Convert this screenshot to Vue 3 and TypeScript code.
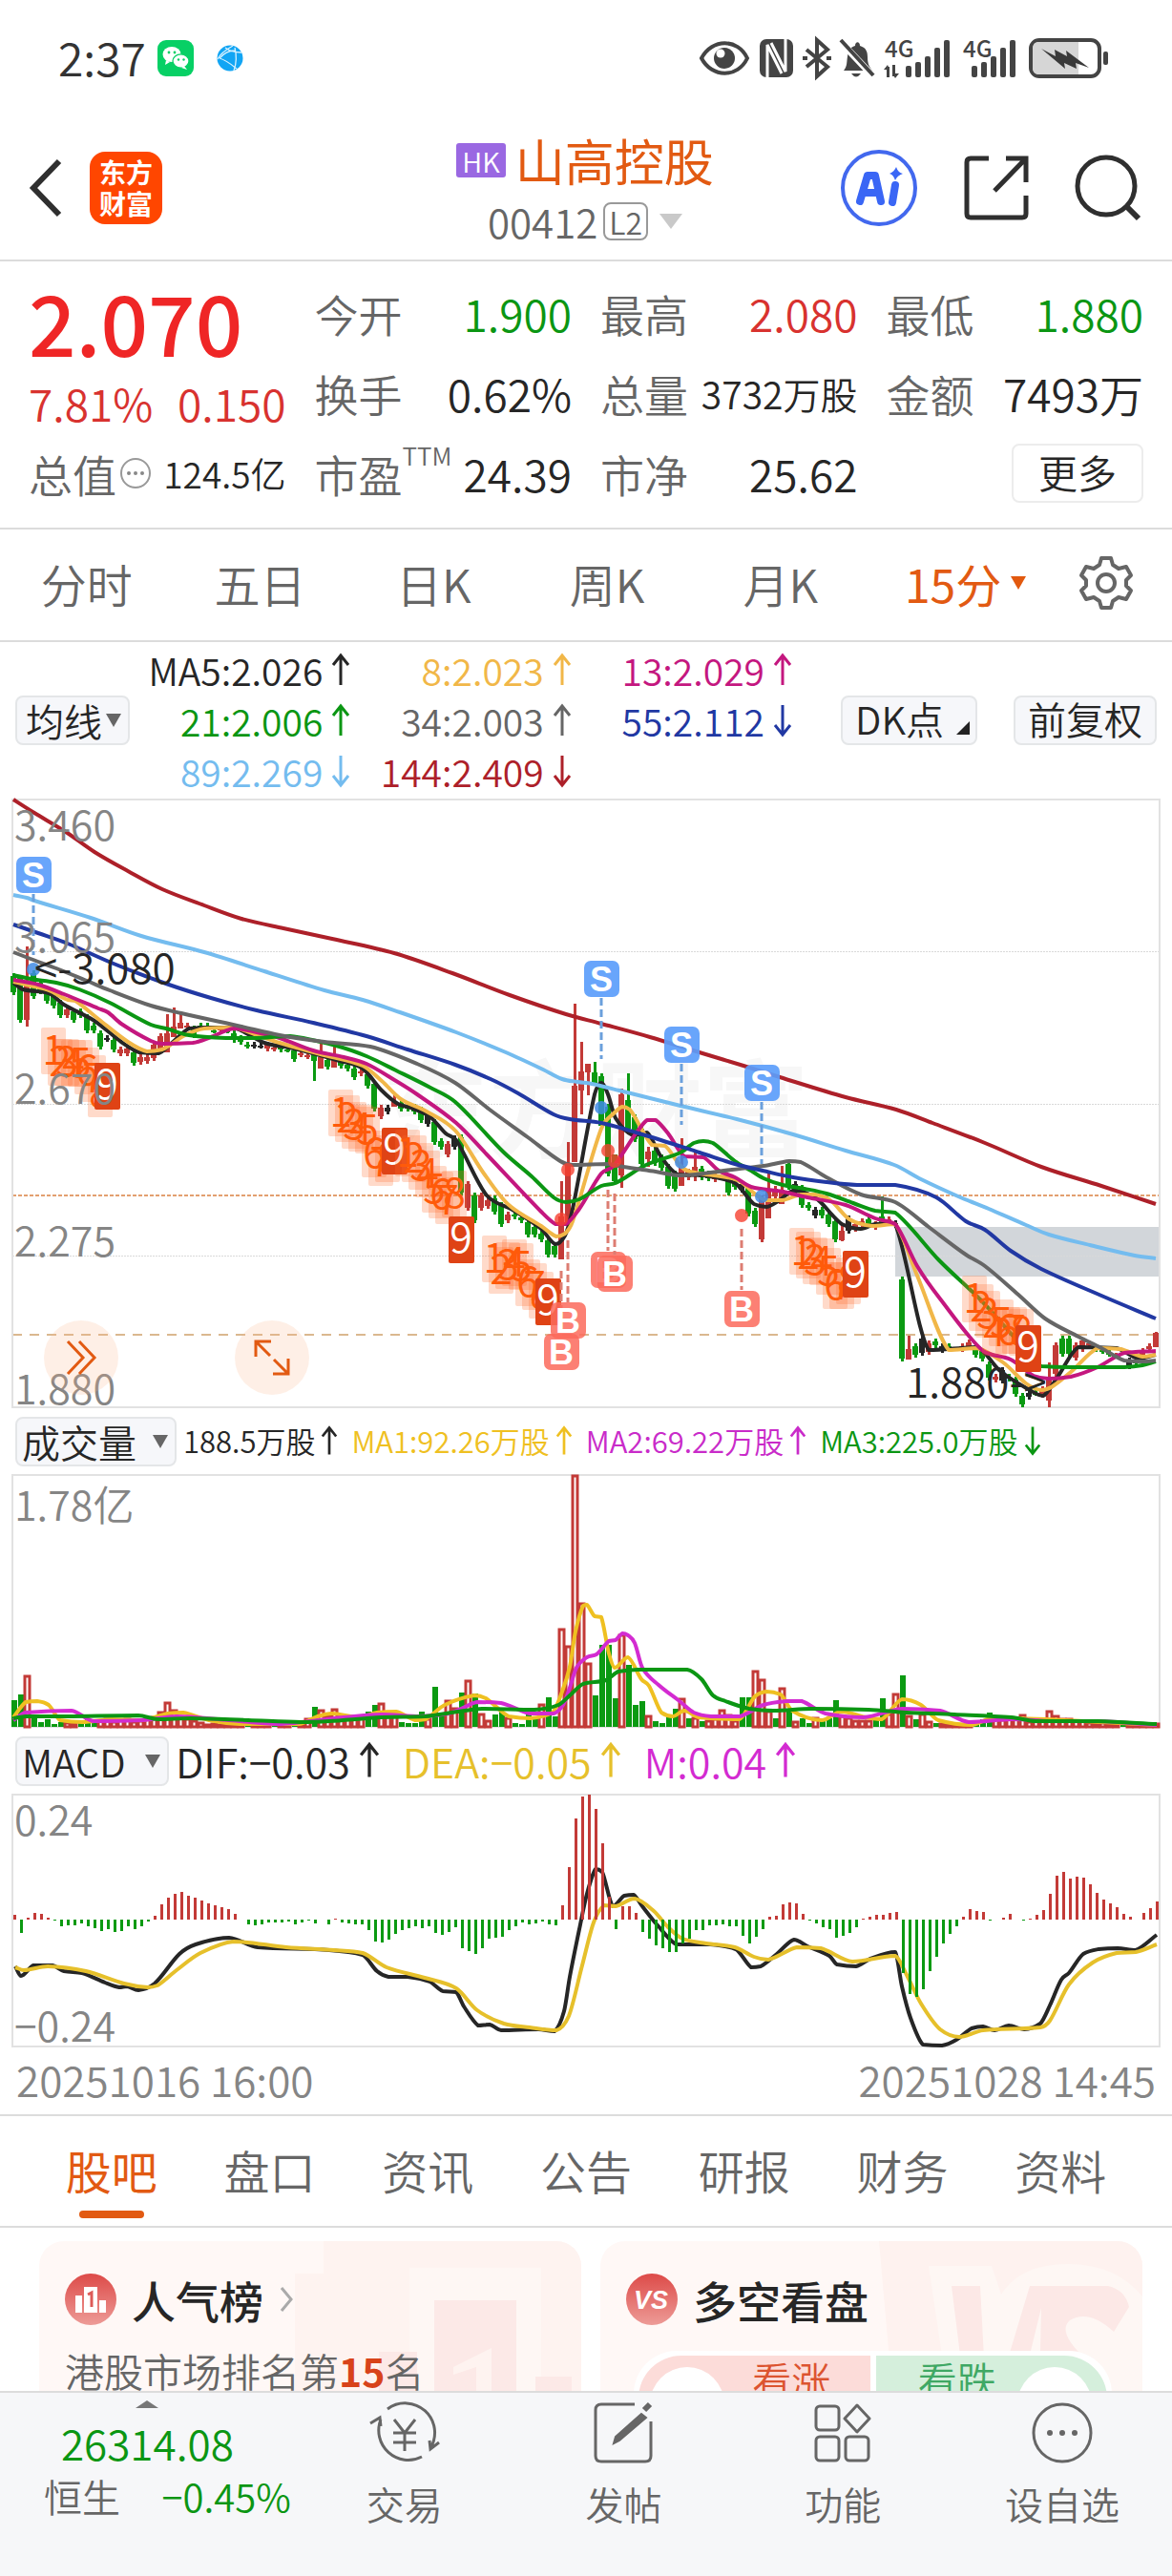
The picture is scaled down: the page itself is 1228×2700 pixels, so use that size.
<script setup lang="ts">
import { ref } from 'vue'

type Tone = 'r' | 'g' | 'k'
interface Candle { x: number; tone: Tone; high: number; low: number; top: number; bottom: number }
interface Line { name: string; color: string; d: string }

const RED = '#c33a37'
const GREEN = '#0b9a12'
const INK = '#262626'
const tones: Record<Tone, string> = { r: RED, g: GREEN, k: INK }

const xAt = (i: number): number => 14 + i * 7

// Turns "x,y x,y ..." into a softly rounded path.
function smooth(points: string): string {
  const p = points.trim().split(/\s+/).map((s) => s.split(',').map(Number))
  let d = `M${p[0][0]} ${p[0][1]}`
  for (let i = 0; i < p.length - 1; i++) {
    const a = p[Math.max(i - 1, 0)]
    const b = p[i]
    const c = p[i + 1]
    const e = p[Math.min(i + 2, p.length - 1)]
    const k = (c[0] - b[0]) / 3
    const limit = (slope: number): number => {
      const own = (c[1] - b[1]) / (c[0] - b[0])
      return slope * own < 0 ? 0 : Math.sign(slope) * Math.min(Math.abs(slope), Math.abs(own) * 2)
    }
    const s1 = limit((c[1] - a[1]) / (c[0] - a[0]))
    const s2 = limit((e[1] - b[1]) / (e[0] - b[0]))
    d += `C${(b[0] + k).toFixed(1)} ${(b[1] + k * s1).toFixed(1)} ${(c[0] - k).toFixed(1)} ${(c[1] - k * s2).toFixed(1)} ${c[0]} ${c[1]}`
  }
  return d
}

// index, tone, high, low, optional body top and bottom
const rawCandles = `0g1020-1043 1g1022-1072 2r992-1076-1030-1069 3g1017-1047 4g1027-1042 5g1038-1052 6g1040-1057 7g1048-1067 8r1055-1067 9g1057-1072
10g1057-1067 11g1063-1083 12g1072-1083 13g1080-1100 14k1085-1092 15g1087-1103 16r1097-1107 17r1096-1107 18g1100-1117 19r1105-1116 20r1105-1115
21r1092-1112 22r1083-1103 23r1063-1103-1083-1103 24r1056-1087-1076-1087 25r1063-1078-1072-1078 26r1072-1080 27g1075-1088 28g1072-1080 29g1072-1078
30g1077-1083 31r1075-1082 32g1077-1083 33g1080-1093 34g1085-1095 35g1092-1099 36k1092-1099 37k1093-1099 38r1092-1102 39r1095-1102 40g1093-1103
41g1097-1103 42g1098-1113 43r1101-1108 44r1103-1110 45g1103-1133-1103-1112 46r1093-1120-1108-1120 47g1108-1121 48r1097-1119-1108-1119 49g1110-1120 50g1113-1123
51g1117-1132 52r1120-1128 53g1123-1141 54g1133-1165 55r1158-1173 56k1158-1168 57r1145-1160-1154-1160 58g1153-1165 59g1155-1165 60g1157-1168
61g1160-1177 62k1165-1181 63g1173-1200 64g1193-1205 65r1196-1213 66k1190-1205 67g1189-1253 68r1238-1269 69g1250-1282 70r1250-1269 71r1255-1267 72g1253-1273
73g1260-1286 74r1270-1282 75g1270-1278 76g1273-1282 77g1278-1297 78g1283-1297 79g1290-1302 80g1297-1318 81g1303-1318 82r1238-1320-1275-1320
83r1197-1285-1220-1285 84r1052-1218-1138-1218 85r1092-1168-1123-1143 86r1115-1148-1115-1124 87g1113-1137-1124-1137 88g1125-1183 89g1157-1233 90g1210-1240-1210-1238
91r1141-1245-1147-1232 92g1125-1183-1153-1183 93g1168-1197 94g1180-1223 95r1202-1223-1207-1215 96g1203-1222 97g1210-1227 98g1220-1246 99g1227-1249
100r1193-1243-1222-1243 101r1225-1237 102r1207-1238-1223-1231 103g1222-1237 104g1227-1238 105r1230-1239 106r1232-1237 107g1233-1253 108g1237-1247 109k1238-1250
110g1242-1275 111g1266-1286 112r1253-1302 113r1230-1277-1247-1277 114r1243-1257 115r1222-1262-1247-1262 116g1217-1247 117k1238-1252 118g1242-1266 119g1260-1269
120k1265-1277 121g1265-1277 122g1270-1286 123g1277-1302 124r1282-1301-1290-1300 125k1274-1293 126r1280-1291 127r1277-1287 128g1275-1287 129r1280-1289
130g1254-1283-1275-1283 131r1275-1284 132k1279-1287 133g1338-1427 134r1400-1425-1414-1425 135g1408-1423 136k1400-1421 137r1405-1420 138g1403-1413 139k1408-1418
140g1408-1415 142r1408-1417 143r1404-1415 144g1408-1423 145g1413-1427 146g1427-1447 147r1440-1449 148k1433-1450 149g1440-1448 150g1443-1464
151g1460-1475 152k1457-1467 153g1457-1463 154r1453-1465 155r1428-1475-1443-1468 156r1407-1443 157g1400-1422 158g1400-1422 159r1407-1426 160r1402-1417
161r1405-1413 162g1409-1417 163g1412-1419 164g1415-1422 165r1418-1422 167k1423-1435 168g1424-1430 169r1413-1423 170r1408-1417 171r1396-1412-1397-1412`

const candles: Candle[] = rawCandles.split(/\s+/).map((s) => {
  const m = /^(\d+)([rgk])(.+)$/.exec(s)!
  const v = m[3].split('-').map(Number)
  return { x: xAt(+m[1]), tone: m[2] as Tone, high: v[0], low: v[1], top: v[2] ?? v[0] + 3, bottom: v[3] ?? v[1] - 3 }
})

const priceLines: Line[] = [
  { name: 'MA144', color: '#ad2029', d: smooth('14,838 36,852 69,872 99,893 134,913 170,932 214,949 253,963 297,973 348,984 413,999 474,1020 534,1043 593,1063 630,1073 681,1087 736,1104 779,1117 817,1129 886,1150 939,1163 977,1177 1032,1198 1091,1223 1154,1243 1211,1262') },
  { name: 'MA5', color: INK, d: smooth('14,1030 24,1037 51,1041 67,1053 99,1070 127,1092 146,1103 166,1104 178,1095 198,1078 214,1077 245,1077 277,1093 308,1099 356,1112 380,1120 400,1143 417,1157 430,1161 450,1170 467,1188 478,1195 510,1253 537,1268 567,1288 582,1304 592,1295 600,1267 623,1147 630,1135 637,1147 645,1172 663,1190 678,1187 693,1213 710,1231 737,1232 770,1240 790,1262 803,1265 817,1258 831,1248 854,1255 882,1283 902,1288 917,1283 938,1283 973,1415 1024,1412 1048,1437 1079,1457 1093,1463 1107,1445 1130,1412 1170,1413 1193,1424 1211,1420') },
  { name: 'MA8', color: '#f1b748', d: smooth('14,1029 36,1034 51,1038 71,1048 79,1049 103,1068 134,1092 154,1102 170,1100 194,1085 214,1078 245,1077 269,1085 293,1093 336,1105 380,1117 400,1133 420,1152 447,1165 477,1185 507,1230 532,1262 567,1285 583,1296 592,1293 600,1280 630,1183 643,1167 652,1160 660,1163 683,1200 697,1201 713,1222 723,1228 773,1237 793,1253 803,1258 820,1258 839,1252 854,1252 870,1258 890,1278 914,1285 938,1283 961,1337 994,1415 1024,1413 1051,1428 1075,1450 1091,1457 1103,1453 1122,1438 1150,1413 1174,1414 1197,1422 1211,1420') },
  { name: 'MA13', color: '#c4177f', d: smooth('14,1027 40,1032 67,1042 103,1057 113,1061 127,1073 158,1091 170,1094 202,1093 221,1087 245,1078 269,1082 293,1088 328,1101 360,1108 384,1115 415,1133 437,1147 478,1177 510,1210 567,1270 582,1283 593,1283 607,1267 630,1230 643,1222 667,1187 678,1174 687,1174 700,1188 717,1212 737,1213 753,1227 770,1234 787,1244 820,1249 846,1255 886,1263 917,1277 938,1283 961,1327 984,1360 1030,1416 1059,1425 1083,1442 1099,1445 1122,1443 1150,1433 1178,1418 1211,1416') },
  { name: 'MA21', color: '#0b9613', d: smooth('14,1022 32,1026 59,1030 83,1037 115,1051 158,1074 174,1078 198,1085 237,1088 269,1088 304,1086 352,1096 384,1107 415,1122 451,1140 477,1155 527,1207 557,1233 580,1255 593,1260 607,1257 630,1243 645,1240 677,1221 713,1208 727,1198 737,1196 747,1198 770,1217 787,1227 800,1235 820,1242 843,1246 866,1251 894,1261 917,1269 938,1271 984,1321 1028,1363 1063,1402 1091,1432 1122,1433 1178,1433 1197,1431 1211,1427') },
  { name: 'MA34', color: '#666666', d: smooth('14,998 32,1005 59,1015 91,1028 115,1038 158,1054 190,1062 253,1076 293,1085 340,1092 388,1097 437,1115 477,1135 513,1163 553,1192 587,1217 600,1221 637,1220 653,1223 687,1228 713,1232 767,1226 800,1222 827,1217 839,1218 866,1234 902,1252 938,1260 973,1286 1012,1315 1032,1327 1067,1357 1095,1382 1130,1401 1154,1413 1178,1426 1197,1427 1211,1426') },
  { name: 'MA55', color: '#2138a3', d: smooth('14,969 40,978 71,989 119,1010 174,1031 221,1046 269,1059 328,1072 384,1086 427,1100 477,1116 514,1131 543,1146 580,1168 597,1173 630,1177 673,1189 733,1208 770,1220 799,1227 831,1234 866,1239 898,1242 938,1242 981,1255 1012,1280 1032,1289 1059,1311 1091,1330 1154,1358 1211,1382') },
  { name: 'MA89', color: '#74bcef', d: smooth('14,938 28,941 36,944 95,962 148,981 214,998 277,1018 340,1038 380,1048 419,1061 478,1082 530,1103 569,1121 589,1131 605,1134 620,1136 649,1143 709,1158 772,1173 831,1189 886,1206 937,1221 965,1236 1004,1254 1036,1267 1075,1284 1099,1294 1142,1305 1189,1316 1211,1319') },
]

const priceLabels = [
  { text: '3.460', y: 881 }, { text: '3.065', y: 998 }, { text: '2.670', y: 1157 },
  { text: '2.275', y: 1317 }, { text: '1.880', y: 1472 },
]

// Nine-turn counts: x of the first mark, tops of marks 1-8, then the closing 9.
const turns = [
  { x: 43, tops: [1077, 1089, 1089, 1090, 1090, 1098, 1106, 1122], nine: 1114 },
  { x: 344, tops: [1142, 1148, 1155, 1158, 1160, 1185, 1194, 1190], nine: 1182 },
  { x: 414, tops: [1184, 1190, 1198, 1206, 1222, 1228, 1234, 1227], nine: 1275 },
  { x: 505, tops: [1295, 1307, 1302, 1299, 1303, 1320, 1324, 1333], nine: 1340 },
  { x: 827, tops: [1287, 1291, 1297, 1298, 1308, 1323, 1323, 1318], nine: 1311 },
  { x: 1008, tops: [1337, 1346, 1353, 1372, 1362, 1370, 1370, 1372], nine: 1389 },
]

const signals = [
  { side: 'S', x: 35, y: 917, dot: 1016, from: 937, to: 1001 },
  { side: 'S', x: 630, y: 1026, dot: 1161, from: 1046, to: 1110 },
  { side: 'S', x: 714, y: 1095, dot: 1218, from: 1115, to: 1179 },
  { side: 'S', x: 798, y: 1135, dot: 1254, from: 1155, to: 1220 },
  { side: 'B', x: 588, y: 1417, dot: 1278, from: 1332, to: 1397 },
  { side: 'B', x: 595, y: 1384, dot: 1226, from: 1300, to: 1365 },
  { side: 'B', x: 637, y: 1331, dot: 1206, from: 1247, to: 1311 },
  { side: 'B', x: 644, y: 1335, dot: 1217, from: 1251, to: 1315 },
  { side: 'B', x: 777, y: 1372, dot: 1274, from: 1288, to: 1352 },
]

// Volume bar heights with their direction.
const rawVolumes = `g28 g34 r53 g13 g5 g8 g3 g5 r4 r3 g4 g8 g5 r6 r8 r5 r7 r8 r5 r6 r8 r10 r15 r25 r17 r10 r8 r6 r4 r2 r3 r2 r2 r3 r2 g2 r2 r2 r2 g2 r2 r2 g2 r3 r8 g21 r17 r11 r18 r11 r9 r11 r9 g16 g23 r24 r14 r11 g5 g4 g4 g16 r8 g42 g13 r27 r19 g36 r48 g35 r13 r6 g13 g16 r9 g4 g3 g16 g11 r23 g31 g11 r102 r84 r263 r129 r66 g33 g86 g86 g30 r96 g65 g23 g27 r11 g6 g4 g13 g19 r29 g9 r9 g6 r6 r8 r17 r12 r6 g31 g31 r58 r49 r16 g9 r40 g18 r5 g9 g4 r9 g6 g9 g28 r11 r9 r6 r6 r6 g9 g30 r13 r34 g54 r11 g8 r13 r5 g4 r3 r3 r2 r2 r3 g3 g8 g15 r9 r7 r8 r8 r12 r5 r6 r6 r16 r11 r8 r8 r6 r6 r4 r3 r4 r2 r2 g2 r2 r2 r2 r2 r3`
const volumes = rawVolumes.split(/\s+/).map((s, i) => ({ x: xAt(i), up: s[0] === 'r', h: Number(s.slice(1)) }))

const volumeLines: Line[] = [
  { name: 'MA1', color: '#efc021', d: smooth('14,1800 27,1784 39,1783 51,1787 63,1803 86,1805 117,1802 149,1803 176,1796 192,1795 219,1803 251,1807 313,1807 333,1799 348,1796 376,1800 395,1795 415,1794 435,1803 446,1802 466,1787 497,1777 509,1780 533,1799 556,1801 579,1795 589,1773 597,1747 603,1710 611,1683 615,1682 623,1694 630,1695 638,1733 644,1748 658,1737 672,1760 680,1767 693,1795 705,1799 717,1793 732,1800 775,1802 791,1778 803,1773 818,1776 830,1793 861,1803 881,1794 908,1800 924,1802 945,1781 965,1787 983,1803 1018,1808 1038,1801 1065,1801 1096,1802 1135,1804 1212,1808') },
  { name: 'MA2', color: '#d32bd1', d: smooth('14,1803 27,1795 75,1793 98,1804 150,1803 185,1799 240,1803 290,1807 325,1804 360,1800 400,1797 440,1799 470,1796 485,1790 500,1784 525,1785 555,1796 580,1796 590,1787 597,1769 604,1748 615,1737 625,1734 638,1720 645,1719 652,1712 658,1714 665,1722 673,1748 690,1766 712,1783 727,1795 745,1799 775,1799 800,1787 825,1783 840,1783 865,1796 905,1800 945,1791 985,1793 1015,1805 1060,1802 1100,1804 1150,1804 1212,1808') },
  { name: 'MA3', color: '#0b9613', d: smooth('14,1801 27,1799 70,1799 145,1798 165,1802 200,1801 260,1803 315,1805 345,1804 400,1800 445,1799 480,1794 505,1791 560,1792 585,1787 597,1777 611,1765 635,1761 648,1752 668,1750 720,1750 735,1760 747,1777 760,1783 785,1791 810,1793 850,1791 910,1792 950,1795 1000,1797 1060,1800 1085,1804 1150,1804 1212,1807') },
]

const macd = [5, -14, 2, 7, 6, 2, -1, -7, -6, -6, -4, -7, -9, -12, -10, -13, -12, -7, -10, -7, -2, 4, 16, 23, 27, 29, 25, 23, 20, 17, 15, 13, 11, 6, 0, -5, -6, -5, -3, -3, -3, -2, -5, -3, -1, -4, 0, -5, 1, -3, -4, -5, -5, -11, -23, -24, -21, -15, -11, -9, -7, -9, -7, -14, -16, -13, -8, -30, -33, -36, -30, -20, -19, -18, -11, -7, -3, -5, -4, -2, -5, -6, 15, 55, 106, 129, 131, 116, 80, 24, -10, 14, 14, 7, -13, -20, -27, -30, -34, -34, -25, -20, -11, -11, -6, -6, -5, -7, -7, -17, -25, -18, -10, 3, 4, 16, 18, 17, 6, -1, -4, -8, -10, -19, -17, -14, -8, 1, 3, 5, 5, 7, 8, -56, -78, -81, -73, -54, -39, -25, -15, -7, 3, 11, 9, 8, -1, 0, 2, 6, 0, -1, 1, 5, 10, 27, 46, 50, 43, 45, 44, 37, 28, 21, 17, 13, 6, 3, 0, 7, 12, 19]
  .map((v, i) => ({ x: xAt(i), v }))

const macdLines: Line[] = [
  { name: 'DIF', color: INK, d: smooth('16,2061 22,2071 35,2060 55,2060 67,2066 86,2068 110,2078 125,2083 133,2082 145,2086 162,2079 188,2048 205,2038 240,2031 270,2041 345,2044 380,2049 395,2066 407,2072 427,2072 450,2077 464,2087 478,2088 486,2103 501,2123 513,2122 525,2128 564,2127 581,2129 591,2108 597,2072 607,2022 615,1985 624,1959 631,1962 642,1998 654,1987 664,1986 673,1998 689,2018 709,2038 744,2038 771,2043 787,2062 797,2061 814,2048 832,2033 846,2040 869,2050 877,2059 897,2061 912,2053 938,2046 945,2082 954,2115 967,2143 987,2144 1002,2138 1018,2126 1030,2124 1042,2128 1057,2123 1073,2127 1090,2121 1100,2102 1112,2075 1120,2068 1135,2048 1151,2043 1171,2042 1190,2044 1212,2028') },
  { name: 'DEA', color: '#e6c02b', d: smooth('16,2062 25,2065 50,2061 90,2066 130,2079 155,2083 165,2081 185,2065 210,2047 245,2035 300,2041 350,2044 380,2047 405,2062 445,2073 478,2084 500,2107 528,2121 555,2125 583,2128 596,2113 610,2060 622,2015 633,1997 645,1998 665,1990 685,2003 700,2020 715,2032 740,2037 770,2041 790,2051 805,2054 835,2041 860,2042 893,2056 938,2050 950,2070 965,2100 985,2127 1005,2135 1030,2128 1090,2125 1100,2118 1120,2080 1145,2057 1170,2047 1190,2046 1212,2038') },
]

const UP_ARROW = 'M10 33V2M2 12l8-10 8 10'
const DOWN_ARROW = 'M10 1v31M2 22l8 10 8-10'

const periods = ['分时', '五日', '日K', '周K', '月K', '15分']
const period = ref('15分')
const sections = ['股吧', '盘口', '资讯', '公告', '研报', '财务', '资料']
const section = ref('股吧')

const averages = [
  { text: 'MA5:2.026', up: true, color: INK },
  { text: '8:2.023', up: true, color: '#f1b748' },
  { text: '13:2.029', up: true, color: '#c4177f' },
  { text: '21:2.006', up: true, color: '#0b9613' },
  { text: '34:2.003', up: true, color: '#666666' },
  { text: '55:2.112', up: false, color: '#2138a3' },
  { text: '89:2.269', up: false, color: '#74bcef' },
  { text: '144:2.409', up: false, color: '#ad2029' },
]
const volumeStats = [
  { text: '188.5万股', up: true, color: INK },
  { text: 'MA1:92.26万股', up: true, color: '#efc021' },
  { text: 'MA2:69.22万股', up: true, color: '#c92bc9' },
  { text: 'MA3:225.0万股', up: false, color: '#0b9613' },
]
const macdStats = [
  { text: 'DIF:−0.03', up: true, color: INK },
  { text: 'DEA:−0.05', up: true, color: '#e6c02b' },
  { text: 'M:0.04', up: true, color: '#d32bd1' },
]
</script>

<template>
  <div class="page">
    <div class="status">
      <div class="status-side">
        <span class="clock">2:37</span>
        <svg width="38" height="38" viewBox="0 0 38 38">
          <rect width="38" height="38" rx="9" fill="#07d065" />
          <ellipse cx="15" cy="15" rx="9.500" ry="8" fill="#fff" /><path d="M9 21l-1 5 5-3z" fill="#fff" />
          <ellipse cx="24.500" cy="22" rx="8.500" ry="7.200" fill="#fff" stroke="#07d065" stroke-width="1.300" /><path d="M28 27l3 4-6-2z" fill="#fff" />
          <g fill="#07d065"><circle cx="12" cy="13" r="1.400" /><circle cx="18" cy="13" r="1.400" /><circle cx="22" cy="20.500" r="1.200" /><circle cx="27.500" cy="20.500" r="1.200" /></g>
        </svg>
        <svg class="globe" width="28" height="28" viewBox="0 0 28 28">
          <circle cx="14" cy="14" r="13.500" fill="#12a5f4" />
          <path d="M17 1C8 6 3 11 1 15M3 14c7 2 13 7 18 11M19 3c2 8 2 16-1 24M9 3c5 4 10 5 17 5M3 14C8 9 12 6 19 6" fill="none" stroke="#d9f2ff" stroke-width="1.300" />
        </svg>
      </div>
      <div class="status-side">
        <svg width="334" height="44" viewBox="0 0 334 44">
          <path d="M3 22C14 1 41 1 51 22 41 43 14 43 3 22z" fill="none" stroke="#444" stroke-width="4" />
          <circle cx="27" cy="22" r="11" fill="#444" /><circle cx="23" cy="17" r="4.500" fill="#fff" />
          <rect x="64" y="2" width="35" height="40" rx="7" fill="#444" />
          <path d="M72 42V8l15 30M91 2v34L76 6" fill="none" stroke="#fff" stroke-width="3" />
          <path d="M113 13l22 18-11 10V3l11 10-22 18M109 22h5M134 22h5" fill="none" stroke="#444" stroke-width="4" />
          <path d="M152 35c4-5 3-9 4-15 1-7 4-10 8-11 0-5 5-5 5 0 7 2 8 7 8 12 0 7 2 10 5 14z" fill="#444" />
          <path d="M160 38h10q-5 7-10 0z" fill="#444" />
          <path d="M148 4l34 36" stroke="#fff" stroke-width="7" /><path d="M149 3l34 37" stroke="#444" stroke-width="4" />
          <g fill="#444">
            <rect x="197" y="31" width="3" height="11" /><path d="M194 34l4-5 2 5zM203 38h7l-4 5z" /><rect x="203" y="29" width="3" height="12" />
            <rect x="217" y="30" width="6" height="12" rx="2" /><rect x="227" y="26" width="6" height="16" rx="2" /><rect x="237" y="20" width="6" height="22" rx="2" /><rect x="247" y="11" width="6" height="31" rx="2" /><rect x="257" y="3" width="6" height="39" rx="2" />
            <rect x="286" y="30" width="6" height="12" rx="2" /><rect x="296" y="26" width="6" height="16" rx="2" /><rect x="306" y="20" width="6" height="22" rx="2" /><rect x="316" y="11" width="6" height="31" rx="2" /><rect x="326" y="3" width="6" height="39" rx="2" />
            <text class="net" x="195" y="21">4G</text><text class="net" x="277" y="21">4G</text>
          </g>
        </svg>
        <svg width="84" height="42" viewBox="0 0 84 42">
          <rect x="2" y="2" width="72" height="38" rx="9" fill="#fff" stroke="#444" stroke-width="4" />
          <path d="M10 4h42v34H10q-6 0-6-7V11q0-7 6-7z" fill="#d6d6d6" />
          <path d="M13 11l15 8-1-7 13 7-1-6 24 18-14-5 1 6-13-6 1 6z" fill="#3a3a3a" />
          <rect x="78" y="14" width="5" height="14" rx="2" fill="#444" />
        </svg>
      </div>
    </div>

    <header class="header">
      <div class="header-side">
        <button class="icon-btn" aria-label="返回">
          <svg width="36" height="64" viewBox="0 0 36 64"><path d="M32 4L5 32l27 28" fill="none" stroke="#2f2f2f" stroke-width="6" /></svg>
        </button>
        <a class="logo" href="#"><span>东方</span><span>财富</span></a>
      </div>
      <div class="title">
        <div class="title-row"><span class="hk">HK</span><h1>山高控股</h1></div>
        <button class="code"><span>00412</span><span class="level">L2</span><i class="caret light" /></button>
      </div>
      <div class="header-side end">
        <button class="icon-btn" aria-label="AI">
          <svg width="82" height="82" viewBox="0 0 82 82">
            <circle cx="41" cy="41" r="38" fill="#fff" stroke="#4268ee" stroke-width="4" />
            <path d="M21 55l8-27h8l6 27M26 46h14" fill="none" stroke="#3a66f5" stroke-width="8" stroke-linejoin="round" stroke-linecap="round" />
            <path d="M58 38l-3 18" stroke="#3a66f5" stroke-width="8" stroke-linecap="round" />
            <path d="M59 19q2 6 7 7-6 2-8 7-2-6-6-7 5-2 7-7z" fill="#3a66f5" />
          </svg>
        </button>
        <button class="icon-btn" aria-label="分享">
          <svg width="68" height="68" viewBox="0 0 68 68" fill="none" stroke="#2f2f2f" stroke-width="5">
            <path d="M26 3H7q-4 0-4 4v54q0 4 4 4h54q4 0 4-4V42M44 3h21v25M65 3L32 37" />
          </svg>
        </button>
        <button class="icon-btn" aria-label="搜索">
          <svg width="70" height="70" viewBox="0 0 70 70" fill="none" stroke="#2f2f2f" stroke-width="5"><circle cx="33" cy="33" r="30" /><path d="M54 54l13 13" stroke-width="6" /></svg>
        </button>
      </div>
    </header>

    <section class="quote">
      <div class="price">2.070</div>
      <div class="pair"><span>今开</span><b class="down">1.900</b></div>
      <div class="pair"><span>最高</span><b class="up">2.080</b></div>
      <div class="pair"><span>最低</span><b class="down">1.880</b></div>
      <div class="pair change"><b class="up">7.81%</b><b class="up">0.150</b></div>
      <div class="pair"><span>换手</span><b>0.62%</b></div>
      <div class="pair"><span>总量</span><b class="small">3732万股</b></div>
      <div class="pair"><span>金额</span><b>7493万</b></div>
      <div class="pair">
        <span class="with-icon">总值<svg width="34" height="34" viewBox="0 0 34 34"><circle cx="17" cy="17" r="15" fill="none" stroke="#999" stroke-width="2" /><g fill="#888"><circle cx="10" cy="17" r="2" /><circle cx="17" cy="17" r="2" /><circle cx="24" cy="17" r="2" /></g></svg></span>
        <b class="tiny">124.5亿</b>
      </div>
      <div class="pair"><span class="pe">市盈<sup>TTM</sup></span><b>24.39</b></div>
      <div class="pair"><span>市净</span><b>25.62</b></div>
      <div class="pair more"><button>更多</button></div>
    </section>

    <nav class="periods">
      <button v-for="p in periods" :key="p" class="period" :class="{ on: p === period }" @click="period = p">{{ p }}<i v-if="p === '15分'" class="caret hot" /></button>
      <button class="gear" aria-label="设置">
        <svg width="58" height="58" viewBox="0 0 58 58" fill="none" stroke="#666" stroke-width="4" stroke-linejoin="round">
          <path d="M24 3h10l2 7 6 4 8-2 5 9-5 5v6l5 5-5 9-8-2-6 4-2 7H24l-2-7-6-4-8 2-5-9 5-5v-6l-5-5 5-9 8 2 6-4z" /><circle cx="29" cy="29" r="9" />
        </svg>
      </button>
    </nav>

    <section class="averages">
      <label class="picker ma"><select aria-label="主图指标"><option>均线</option></select><i class="caret" /></label>
      <div class="ma-grid">
        <span v-for="a in averages" :key="a.text" class="reading" :style="{ color: a.color }">{{ a.text }}<svg class="arrow" viewBox="0 0 20 34"><path :d="a.up ? UP_ARROW : DOWN_ARROW" /></svg></span>
      </div>
      <div class="ma-actions">
        <button class="chip dk">DK点<i class="corner" /></button>
        <button class="chip">前复权</button>
      </div>
    </section>

    <section class="chart">
      <svg viewBox="12 837 1204 639">
        <text class="mark" x="400" y="1206">东方财富</text>
        <rect x="938" y="1286" width="277" height="52" fill="#d2d6da" />
        <path d="M13 997.500H1215M13 1157.500H1215M13 1316.500H1215" stroke="#d9d9d9" stroke-width="1" stroke-dasharray="2 1" />
        <path d="M13 1253H1215" stroke="#e3a070" stroke-width="2" stroke-dasharray="4 2" />
        <path d="M13 1399H1215" stroke="#dab88f" stroke-width="2" stroke-dasharray="10 8" />
        <rect x="13" y="838" width="1202" height="637" fill="none" stroke="#e2e2e2" stroke-width="2" />
        <g v-for="c in candles" :key="c.x" :fill="tones[c.tone]">
          <rect :x="c.x - 1" :y="c.high" width="3" :height="c.low - c.high" />
          <rect :x="c.x - 3" :y="c.top" width="6" :height="Math.max(c.bottom - c.top, 2)" />
        </g>
        <path v-for="l in priceLines" :key="l.name" :d="l.d" fill="none" :stroke="l.color" stroke-width="4" stroke-linejoin="round" />
        <g v-for="t in turns" :key="t.x">
          <rect v-for="(y, i) in t.tops" :key="i" :x="t.x + i * 7" :y="y" width="26" height="49" rx="2" fill="#ff6a2a" opacity="0.250" />
          <text v-for="(y, i) in t.tops" :key="'n' + i" class="turn" :x="t.x + i * 7 + 13" :y="y + 39">{{ i + 1 }}</text>
          <rect :x="t.x + 56" :y="t.nine" width="27" height="49" rx="2" fill="#df4315" />
          <text class="turn nine" :x="t.x + 69" :y="t.nine + 38">9</text>
        </g>
        <g v-for="s in signals" :key="s.x" :class="s.side">
          <path :d="`M${s.x} ${s.from}V${s.to}`" class="lead" />
          <circle :cx="s.x" :cy="s.dot" r="7" />
          <rect :x="s.x - 18" :y="s.y - 19" width="37" height="38" rx="7" />
          <text class="side" :x="s.x" :y="s.y + 13">{{ s.side }}</text>
        </g>
        <g class="axis"><text v-for="l in priceLabels" :key="l.text" x="15" :y="l.y">{{ l.text }}</text></g>
        <text class="peak" x="36" y="1031">&lt;-3.080</text>
        <text class="peak" x="949" y="1465">1.880-&gt;</text>
      </svg>
      <button class="float first" aria-label="快进">
        <svg width="34" height="40" viewBox="0 0 34 40" fill="none" stroke="#e25a12" stroke-width="3"><path d="M3 3l16 17L3 37M15 3l16 17-16 17" /></svg>
      </button>
      <button class="float second" aria-label="全屏">
        <svg width="42" height="42" viewBox="0 0 42 42" fill="none" stroke="#e25a12" stroke-width="3"><path d="M20 4H4v16M4 4l15 15M22 38h16V22M38 38L23 23" /></svg>
      </button>
    </section>

    <section class="indicator">
      <label class="picker vol"><select aria-label="副图指标一"><option>成交量</option></select><i class="caret" /></label>
      <span v-for="s in volumeStats" :key="s.text" class="reading stat narrow" :style="{ color: s.color }">{{ s.text }}<svg class="arrow" viewBox="0 0 20 34"><path :d="s.up ? UP_ARROW : DOWN_ARROW" /></svg></span>
    </section>
    <section class="chart">
      <svg viewBox="12 1545 1204 266">
        <rect x="13" y="1546" width="1202" height="264" fill="none" stroke="#e2e2e2" stroke-width="2" />
        <template v-for="v in volumes" :key="v.x">
          <rect v-if="v.up" :x="v.x - 2" :y="1810 - v.h" width="5" :height="v.h" fill="#fff" :stroke="RED" stroke-width="3" />
          <rect v-else :x="v.x - 2" :y="1810 - v.h" width="6" :height="v.h" :fill="GREEN" />
        </template>
        <path v-for="l in volumeLines" :key="l.name" :d="l.d" fill="none" :stroke="l.color" stroke-width="4" stroke-linejoin="round" />
        <g class="axis"><text x="15" y="1594">1.78亿</text></g>
      </svg>
    </section>

    <section class="indicator">
      <label class="picker macd"><select aria-label="副图指标二"><option>MACD</option></select><i class="caret" /></label>
      <span v-for="s in macdStats" :key="s.text" class="reading stat" :style="{ color: s.color }">{{ s.text }}<svg class="arrow wide" viewBox="0 0 20 34"><path :d="s.up ? UP_ARROW : DOWN_ARROW" /></svg></span>
    </section>
    <section class="chart">
      <svg viewBox="12 1880 1204 266">
        <rect x="13" y="1881" width="1202" height="264" fill="none" stroke="#e2e2e2" stroke-width="2" />
        <path v-for="l in macdLines" :key="l.name" :d="l.d" fill="none" :stroke="l.color" stroke-width="4" stroke-linejoin="round" />
        <rect v-for="m in macd" :key="m.x" :x="m.x" :y="m.v > 0 ? 2012 - m.v : 2012" width="3" :height="Math.abs(m.v)" :fill="m.v > 0 ? RED : GREEN" />
        <g class="axis"><text x="15" y="1924">0.24</text><text x="15" y="2140">−0.24</text></g>
      </svg>
    </section>
    <div class="dates"><time>20251016 16:00</time><time>20251028 14:45</time></div>

    <nav class="sections">
      <button v-for="s in sections" :key="s" :class="{ on: s === section }" @click="section = s">{{ s }}</button>
    </nav>

    <main class="feed">
      <article class="card">
        <svg class="ghost" width="300" height="160" viewBox="0 0 300 160">
          <path d="M30 0h270v160H0V34h30z" fill="#fef3f0" /><path d="M120 28h138v132H120z" fill="#fef7f4" />
          <path d="M146 62h86v98h-86z" fill="#fce9e7" /><path d="M166 132l40-20v48h-16v-28l-24 8z" fill="#fef3f0" /><path d="M88 116h40v44H88zM252 142h38v18h-38z" fill="#fce9e7" />
        </svg>
        <h2>
          <svg width="54" height="54" viewBox="0 0 54 54">
            <defs><linearGradient id="rank" x2="0" y2="1"><stop offset="0" stop-color="#dd4a48" /><stop offset="1" stop-color="#ed9b97" /></linearGradient></defs>
            <circle cx="27" cy="27" r="27" fill="url(#rank)" /><path d="M11 23h7v18h-7zM36 28h7v13h-7zM20 14h14v27H20z" fill="#fff" /><path d="M24 22l4-2v15" fill="none" stroke="#dd5a57" stroke-width="3" />
          </svg>
          人气榜
          <svg class="go" width="16" height="28" viewBox="0 0 16 28"><path d="M3 2l10 12L3 26" fill="none" stroke="#aaa" stroke-width="3" /></svg>
        </h2>
        <p>港股市场排名第<strong>15</strong>名</p>
      </article>
      <article class="card">
        <svg class="ghost" width="276" height="160" viewBox="0 0 276 160">
          <path d="M0 0h276v160H14z" fill="#fef2ef" />
          <path d="M52 26h66l10 30q20-32 70-32 50 0 78 34v102H72z" fill="#fef7f4" />
          <path d="M76 47h30l6 113H90zM124 160l34-113h82q18 4 22 22l-16 26q-26-24-46-12-14 12 16 40l12 37h-60l2-90-22 90z" fill="#fce8e6" />
        </svg>
        <h2>
          <svg width="54" height="54" viewBox="0 0 54 54">
            <defs><linearGradient id="vs" x2="0" y2="1"><stop offset="0" stop-color="#dd4a48" /><stop offset="1" stop-color="#ed9b97" /></linearGradient></defs>
            <circle cx="27" cy="27" r="27" fill="url(#vs)" /><text class="vs" x="26" y="37">VS</text>
          </svg>
          多空看盘
        </h2>
        <div class="vote">
          <button class="bull">看涨</button>
          <button class="bear">看跌</button>
        </div>
      </article>
    </main>

    <footer class="bottom">
      <a class="index" href="#">
        <i class="caret flip" />
        <b>26314.08</b>
        <span><em>恒生</em><b class="pct">−0.45%</b></span>
      </a>
      <button>
        <svg width="76" height="68" viewBox="0 0 76 68" fill="none" stroke="#666" stroke-width="3">
          <path d="M20 9A31 31 0 0 1 65 50M56 59A31 31 0 0 1 13 20M2 24l10-6 1 9M74 44l-9 7-1-9M27 20l11 14 11-14M38 34v19M26 34h24M26 44h24" />
        </svg>
        交易
      </button>
      <button>
        <svg width="64" height="68" viewBox="0 0 64 68" fill="none" stroke="#666" stroke-width="3">
          <path d="M44 4H9q-6 0-6 6v48q0 6 6 6h46q6 0 6-6V22" /><path d="M51 14l5 4-28 24-6 3 2-7z" fill="#666" stroke-width="2" /><path d="M54 10l6-6" stroke-width="6" />
        </svg>
        发帖
      </button>
      <button>
        <svg width="62" height="68" viewBox="0 0 62 68" fill="none" stroke="#666" stroke-width="3">
          <rect x="3" y="6" width="24" height="25" rx="4" /><path d="M46 5l13 14-13 14-13-14z" stroke-linejoin="round" /><rect x="3" y="38" width="24" height="25" rx="4" /><rect x="34" y="38" width="24" height="25" rx="4" />
        </svg>
        功能
      </button>
      <button>
        <svg width="66" height="68" viewBox="0 0 66 68"><circle cx="33" cy="34" r="30" fill="none" stroke="#666" stroke-width="3" /><g fill="#666"><circle cx="20" cy="34" r="3" /><circle cx="33" cy="34" r="3" /><circle cx="46" cy="34" r="3" /></g></svg>
        设自选
      </button>
    </footer>
  </div>
</template>

<style>
body { background: #fff; }
</style>

<style scoped>
.page {
  display: flex;
  flex-direction: column;
  height: 100vh;
  overflow: hidden;
  font-family: "Noto Sans CJK SC", sans-serif;
  font-weight: 350;
  color: #262626;
  background: #fff;
}
.page *, .page { box-sizing: border-box; }
.page > * { flex: none; }
button, select {
  font: inherit;
  color: inherit;
  padding: 0;
  border: 0;
  background: none;
  line-height: 1;
}
svg { display: block; overflow: visible; }
b, em { font-weight: inherit; font-style: normal; }
a { color: inherit; text-decoration: none; }

.caret {
  flex: none;
  border: 8px solid transparent;
  border-top: 14px solid #666;
  border-bottom: 0;
}
.caret.light { border-width: 16px 12px 0; border-top-color: #c9c9c9; margin-left: 12px; }
.caret.hot { border-top-color: #e2590f; margin-left: 10px; }
.caret.flip { border-width: 0 12px 8px; border-bottom-color: #777; border-style: solid; }

.status {
  display: flex;
  justify-content: space-between;
  height: 122px;
  padding: 0 66px 0 61px;
}
.status-side { display: flex; align-items: center; gap: 12px; }
.clock { padding-bottom: 4px; font-size: 48px; line-height: 48px; color: #333; }
.globe { margin-left: 12px; }
.net { font-size: 24px; font-weight: 500; }

.header {
  display: grid;
  grid-template-columns: 1fr auto 1fr;
  align-items: center;
  height: 152px;
  padding: 0 32px 0 30px;
  border-bottom: 2px solid #dcdcdc;
}
.header-side { display: flex; align-items: center; gap: 28px; }
.header-side.end { justify-content: flex-end; gap: 48px; }
.logo {
  display: flex;
  flex-direction: column;
  align-items: center;
  justify-content: center;
  width: 76px;
  height: 76px;
  border-radius: 16px;
  background: #ff4600;
  color: #fff;
  font-size: 28px;
  line-height: 33px;
  font-weight: 700;
}
.title { display: flex; flex-direction: column; align-items: center; gap: 14px; }
.title-row { display: flex; align-items: center; gap: 10px; }
.title h1 { margin: 0; font-size: 52px; line-height: 56px; font-weight: 400; color: #e25a12; }
.hk { padding: 0 6px; background: #9a68e2; color: #fff; font-size: 29px; line-height: 36px; border-radius: 3px; }
.code { display: flex; align-items: center; font-size: 42px; line-height: 44px; color: #666; }
.level { margin-left: 6px; padding: 0 4px; font-size: 32px; line-height: 36px; border: 2px solid #999; border-radius: 8px; }

.quote {
  display: grid;
  grid-template-columns: repeat(4, 1fr);
  grid-auto-rows: 84px;
  column-gap: 30px;
  align-items: center;
  height: 281px;
  padding: 12px 30px 0;
  border-bottom: 2px solid #dcdcdc;
}
.price { padding-top: 16px; font-size: 87px; line-height: 92px; font-weight: 500; color: #ef2626; }
.pair { display: flex; align-items: center; justify-content: space-between; font-size: 46px; line-height: 56px; white-space: nowrap; }
.pair span { color: #666; }
.pair b.small { font-size: 39px; }
.pair b.tiny { font-size: 37px; }
.pair b.up { color: #d8322f; }
.pair b.down { color: #0b9613; }
.pe { position: relative; }
.pair sup { position: absolute; left: 100%; top: -4px; font-size: 26px; line-height: 26px; }
.pair .with-icon { display: flex; align-items: center; gap: 3px; }
.change { padding-top: 20px; }
.more { justify-content: flex-end; }
.more button { width: 138px; height: 62px; padding-bottom: 4px; border: 2px solid #ececec; border-radius: 8px; font-size: 41px; }

.periods {
  display: flex;
  align-items: center;
  height: 118px;
  padding-bottom: 4px;
  border-bottom: 2px solid #dcdcdc;
  font-size: 48px;
  color: #666;
}
.period { display: flex; align-items: center; justify-content: center; width: 14.8%; white-space: nowrap; }
.gear { flex: 1; display: flex; justify-content: center; }
.periods .on { color: #e25a12; padding-left: 24px; font-weight: 400; }

.averages {
  display: flex;
  align-items: center;
  height: 164px;
  padding: 0 16px;
}
.ma-grid {
  display: grid;
  grid-template-columns: repeat(3, 1fr);
  flex: 694;
  grid-auto-rows: 53px;
  align-items: center;
  font-size: 39px;
  white-space: nowrap;
}
.ma-grid > span { justify-content: flex-end; line-height: 53px; }
.ma-actions { flex: 382; display: flex; justify-content: flex-end; gap: 38px; }
.reading { display: flex; align-items: center; }
.arrow { flex: none; width: 20px; height: 34px; margin-left: 9px; fill: none; stroke: currentColor; stroke-width: 3; }
.narrow .arrow { width: 18px; margin-left: 6px; }
.arrow.wide { width: 22px; height: 38px; }
.picker { position: relative; display: flex; align-items: center; flex: none; }
.picker select {
  appearance: none;
  width: 100%;
  height: 52px;
  padding: 0 0 3px 5px;
  font-size: 40px;
  line-height: 48px;
  border: 2px solid #e4e6e8;
  border-radius: 8px;
  background: #f6f7fa;
}
.picker .caret { position: absolute; right: 9px; }
.picker.ma { width: 120px; }
.picker.ma select { padding-left: 9px; }
.picker.vol { width: 169px; }
.picker.macd { width: 161px; }
.chip {
  height: 52px;
  padding: 0 13px 4px;
  font-size: 40px;
  border: 2px solid #e4e6e8;
  border-radius: 8px;
  background: #f6f7fa;
  white-space: nowrap;
}
.chip.dk { padding-right: 6px; }
.corner { display: inline-block; margin-left: 13px; border-left: 14px solid transparent; border-bottom: 14px solid #222; }

.chart { position: relative; margin: 0 12px; }
.chart > svg { width: 100%; height: auto; }
.axis { font-size: 43px; fill: #858585; }
.mark { font-size: 112px; font-weight: 700; fill: #f7f7f7; }
.peak { font-size: 44px; fill: #262626; }
.turn { font-size: 43px; fill: #ff5a0a; text-anchor: middle; }
.nine { fill: #fff; }
.side { font-family: "Liberation Sans", sans-serif; font-size: 36px; font-weight: 700; text-anchor: middle; fill: #fff; }
.lead { stroke-width: 3; stroke-dasharray: 8 4; fill: none; }
.S .lead { stroke: #6ba0dc; }
.B .lead { stroke: #dd7d72; }
.S rect { fill: #5b9dfb; fill-opacity: 0.920; }
.B rect { fill: #fb6a5c; fill-opacity: 0.850; }
.S circle { fill: #3f8be6; fill-opacity: 0.850; }
.B circle { fill: #f6402f; fill-opacity: 0.800; }
.float {
  position: absolute;
  bottom: 14px;
  display: grid;
  place-items: center;
  width: 78px;
  height: 78px;
  border-radius: 50%;
  background: rgba(250, 180, 140, 0.220);
}
.first { left: 34px; }
.second { left: 234px; }

.indicator { display: flex; align-items: center; height: 69px; padding: 0 16px; white-space: nowrap; }
.stat { margin-left: 7px; padding-bottom: 2px; font-size: 43px; line-height: 52px; }
.stat + .stat { margin-left: 24px; }
.stat.narrow { font-size: 31px; }
.stat.narrow + .narrow { margin-left: 14px; }

.dates {
  display: flex;
  justify-content: space-between;
  height: 72px;
  padding: 0 17px;
  font-size: 44px;
  line-height: 66px;
  color: #858585;
  border-bottom: 2px solid #dcdcdc;
}

.sections {
  display: flex;
  height: 117px;
  padding: 0 34px;
  border-bottom: 2px solid #dcdcdc;
  font-size: 48px;
  color: #666;
}
.sections button { position: relative; flex: 1; padding-bottom: 4px; }
.sections .on { color: #e25a12; font-weight: 400; }
.sections .on::after {
  content: "";
  position: absolute;
  left: calc(50% - 34px);
  bottom: 8px;
  width: 68px;
  height: 8px;
  border-radius: 4px;
  background: #e25a12;
}

.page > .feed {
  display: flex;
  flex: 1 1 0;
  min-height: 0;
  gap: 20px;
  padding: 14px 31px 0 41px;
  overflow: hidden;
}
.card {
  position: relative;
  flex: 1;
  height: 240px;
  padding: 34px 27px;
  border-radius: 26px;
  background: #fff8f6;
  overflow: hidden;
}
.ghost { position: absolute; right: 0; top: 0; }
.card h2 {
  position: relative;
  display: flex;
  align-items: center;
  gap: 16px;
  margin: 0;
  font-size: 46px;
  line-height: 54px;
  font-weight: 500;
}
.card p { position: relative; margin: 17px 0 0; font-size: 41px; line-height: 60px; color: #666; }
.card strong { font-weight: 700; color: #d8431a; }
.vs { font-family: "Liberation Sans", sans-serif; font-size: 27px; font-weight: 700; font-style: italic; fill: #fff; text-anchor: middle; }
.vote {
  position: relative;
  display: flex;
  gap: 6px;
  height: 90px;
  margin: 27px 5px 0 8px;
  border: 5px solid #fff;
  border-bottom: 0;
  border-radius: 45px 45px 0 0;
  background: #fff;
  font-size: 41px;
}
.vote button { position: relative; flex: none; width: calc(50% - 3px); height: 100px; }
.vote button::before { content: ""; position: absolute; top: 12px; width: 78px; height: 78px; border-radius: 50%; background: #fff; }
.vote .bull { padding: 0 0 52px 78px; border-radius: 45px 0 0 0; background: #fcdcd9; color: #dc5430; }
.vote .bear { padding: 0 72px 52px 0; border-radius: 0 45px 0 0; background: #d5efdc; color: #3fa864; }
.bull::before { left: 12px; }
.bear::before { right: 16px; }

.bottom {
  display: flex;
  height: 194px;
  padding-top: 8px;
  border-top: 2px solid #dcdcdc;
  background: #f6f7f9;
  color: #666;
}
.bottom > * { display: flex; flex-direction: column; align-items: center; flex: 230; font-size: 40px; }
.bottom > button { gap: 18px; line-height: 44px; }
.bottom .index { flex: 309; color: #0b9613; }
.index > b { margin-top: 8px; font-size: 44px; line-height: 56px; }
.index > span { display: flex; justify-content: space-between; align-self: stretch; padding: 0 4px 0 46px; line-height: 56px; }
.index em { color: #666; }
</style>
